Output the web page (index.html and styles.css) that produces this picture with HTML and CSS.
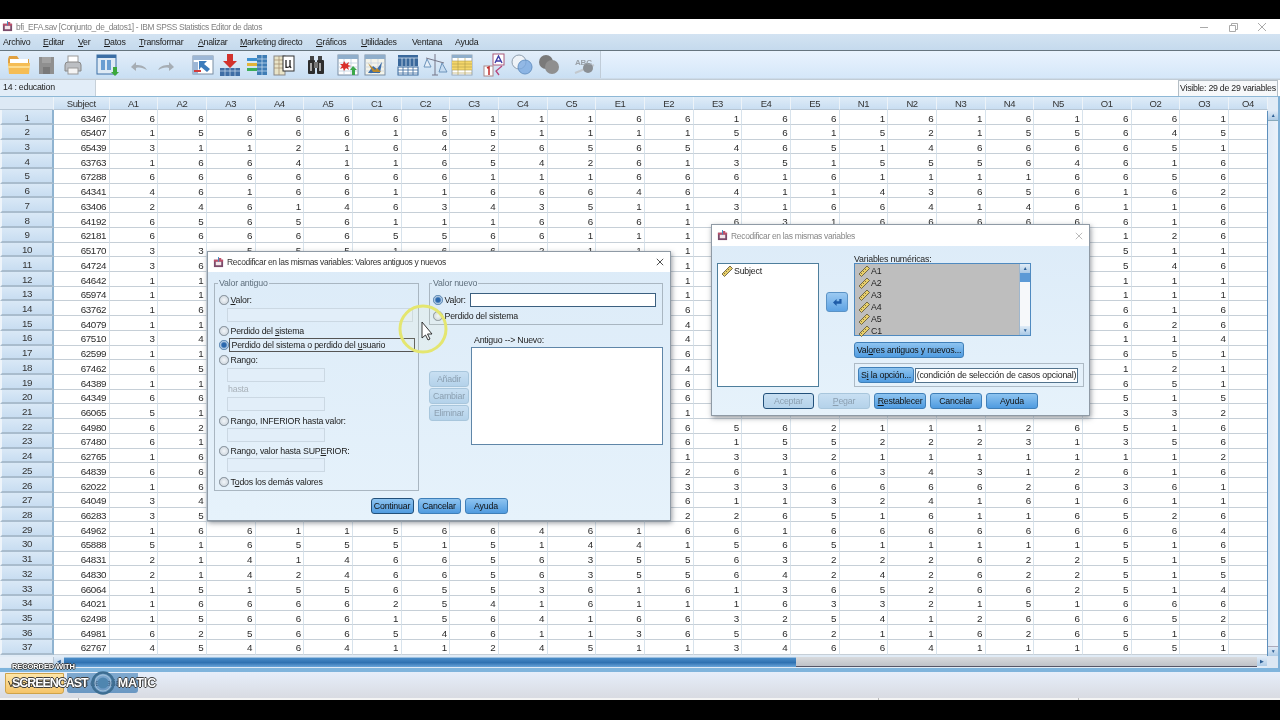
FILE: index.html
```html
<!DOCTYPE html>
<html lang="es">
<head>
<meta charset="utf-8">
<title>bfi_EFA.sav - IBM SPSS Statistics Editor de datos</title>
<link rel="stylesheet" href="styles.css">
</head>
<body>
<div class="screen">
<div class="letterbox"></div>
<main class="app">
<header class="titlebar">
<svg class="appicon" viewBox="0 0 12 12"><rect x="1" y="3" width="10" height="8" fill="#7a4a6a"/><rect x="3" y="5" width="6" height="4" fill="#f3e6ea"/><path d="M1 3h5V1h3v2h2v2H1z" fill="#c0506a"/><path d="M6 0v5" stroke="#3a8ac0"/></svg>
<span class="title-text">bfi_EFA.sav [Conjunto_de_datos1] - IBM SPSS Statistics Editor de datos</span>
<div class="winctl">
<svg viewBox="0 0 10 10"><path d="M1 5.500h8" stroke="#aaa"/></svg>
<svg viewBox="0 0 10 10"><path d="M1.500 3.500h6v6h-6zM3.500 3.500V1.500h6v6h-2" fill="none" stroke="#aaa"/></svg>
<svg viewBox="0 0 10 10"><path d="M1 1l8 8M9 1l-8 8" stroke="#aaa"/></svg>
</div>
</header>
<nav class="menubar">
<span class="m-arch">Archivo</span><span class="m-edit"><u>E</u>ditar</span><span class="m-ver"><u>V</u>er</span><span class="m-dat"><u>D</u>atos</span><span class="m-tra"><u>T</u>ransformar</span><span class="m-ana"><u>A</u>nalizar</span><span class="m-mar"><u>M</u>arketing directo</span><span class="m-gra"><u>G</u>ráficos</span><span class="m-uti"><u>U</u>tilidades</span><span class="m-ven">Ventana</span><span class="m-ayu">Ayuda</span>
</nav>
<div class="toolbar">
<div class="tools">
<svg class="tool" viewBox="0 0 26 24"><path d="M2 6l1-3h8l2 3h10v4H2z" fill="#e0a040"/><rect x="4" y="6" width="18" height="6" fill="#fff"/><path d="M2 10h22l-1 11H3z" fill="#f5bd55"/><path d="M2 13h22v2H2z" fill="#fcdc90"/></svg>
<svg class="tool" viewBox="0 0 26 24"><path d="M6 4h15v17H6z" fill="#8f8f8f"/><rect x="9" y="4" width="9" height="6" fill="#a2a2a2"/><rect x="10" y="14" width="7" height="7" fill="#797979"/></svg>
<svg class="tool" viewBox="0 0 26 24"><rect x="8" y="3" width="10" height="7" fill="#fff" stroke="#999"/><path d="M5 12a3 3 0 0 1 3-3h10a3 3 0 0 1 3 3v6H5z" fill="#bcbfc3" stroke="#888"/><rect x="8" y="15" width="10" height="6" fill="#f4f4f4" stroke="#999"/></svg>
<svg class="tool g7" viewBox="0 0 26 24"><rect x="3" y="2" width="19" height="19" fill="#dfeaf5" stroke="#3b6ea5"/><rect x="3" y="2" width="19" height="3" fill="#3b6ea5"/><path d="M7 7h4v10H7zM13 7h4v10h-4z" fill="#6a9ed2"/><path d="M19 14h4v5h2l-4 4-4-4h2z" fill="#3ca83c"/></svg>
<svg class="tool g5" viewBox="0 0 26 24"><path d="M5 14l5-5v3c5 0 9 1 11 5-4-2-7-3-11-2v3z" fill="#a6adb4"/></svg>
<svg class="tool" viewBox="0 0 26 24"><path d="M21 14l-5-5v3c-5 0-9 1-11 5 4-2 7-3 11-2v3z" fill="#a6adb4"/></svg>
<svg class="tool g10" viewBox="0 0 26 24"><rect x="3" y="3" width="20" height="18" fill="#fff" stroke="#7b8ea3"/><path d="M3 3h20v4H3zM3 9h5v12H3z" fill="#9db7d6"/><path d="M9 8l8 0-3 3 6 5-3 3-6-5-2 3z" fill="#3c7cbc"/><path d="M4 17h7v2H4z" fill="#d23c3c"/></svg>
<svg class="tool" viewBox="0 0 26 24"><rect x="3" y="15" width="20" height="8" fill="#3f6ea5"/><path d="M3 18h20M8 15v8M13 15v8M18 15v8" stroke="#cfe0f0" stroke-width=".7"/><path d="M10 1h6v7h4l-7 7-7-7h4z" fill="#d2322d"/></svg>
<svg class="tool" viewBox="0 0 26 24"><rect x="13" y="2" width="10" height="20" fill="#3f7db5"/><path d="M13 6h10M13 10h10M13 14h10M13 18h10M18 2v20" stroke="#cfe3f3" stroke-width=".7"/><path d="M3 5h10v3H3z" fill="#3c8fd0"/><path d="M3 10h10v3H3z" fill="#e2b43a"/><path d="M3 15h10v3H3z" fill="#3cae5a"/></svg>
<svg class="tool" viewBox="0 0 26 24"><rect x="3" y="3" width="11" height="19" fill="#e9e4c8" stroke="#888"/><path d="M3 7h11M3 11h11M3 15h11M8 3v19" stroke="#a08a6a" stroke-width=".7"/><rect x="12" y="3" width="11" height="15" fill="#fff" stroke="#333"/><path d="M15 7v8M15 13q0 2 3 1l1-1V7M19 13l1 2" fill="none" stroke="#222" stroke-width="1.300"/></svg>
<svg class="tool g5" viewBox="0 0 26 24"><rect x="7" y="3" width="4" height="4" fill="#444"/><rect x="15" y="3" width="4" height="4" fill="#444"/><rect x="5" y="7" width="7" height="14" rx="1" fill="#2d2d2d"/><rect x="14" y="7" width="7" height="14" rx="1" fill="#2d2d2d"/><rect x="11" y="9" width="4" height="6" fill="#777"/><rect x="7" y="10" width="2" height="8" fill="#aaa"/><rect x="16" y="10" width="2" height="8" fill="#aaa"/></svg>
<svg class="tool g5" viewBox="0 0 26 24"><rect x="3" y="2" width="20" height="20" fill="#fff" stroke="#7b8ea3"/><path d="M3 2h20v4H3z" fill="#8faecb"/><path d="M3 10h20M3 14h20M3 18h20M9 6v16M16 6v16" stroke="#b6c8da" stroke-width=".7"/><path d="M9 8l2 3 3-2-1 3 3 1-3 1 1 3-3-2-2 3-1-3-3 1 2-3-2-2 3 0z" fill="#d9302b"/><path d="M18 13l4 4h-2v5h-3v-5h-2z" fill="#3ba84a"/></svg>
<svg class="tool" viewBox="0 0 26 24"><rect x="3" y="2" width="20" height="20" fill="#f4f4ea" stroke="#7b8ea3"/><path d="M3 2h20v4H3z" fill="#8faecb"/><path d="M3 10h20M3 14h20M3 18h20M9 6v16M16 6v16" stroke="#c0cddc" stroke-width=".7"/><path d="M6 20l5-7 4 3 5-7-2 11z" fill="#3a6ca8"/><path d="M6 10l7 7 2-2 4 4h-8z" fill="#b9892e"/></svg>
<svg class="tool g6" viewBox="0 0 26 24"><rect x="3" y="2" width="20" height="11" fill="#39689c"/><path d="M3 5h20M7 5v8M11 5v8M15 5v8M19 5v8" stroke="#d5e3f0" stroke-width=".8"/><rect x="3" y="14" width="20" height="8" fill="#fff" stroke="#39689c"/><path d="M3 17h20M3 20h20M8 14v8M13 14v8M18 14v8" stroke="#39689c" stroke-width=".8"/></svg>
<svg class="tool" viewBox="0 0 26 24"><path d="M13 1v3M4 5l18 5" stroke="#778"/><path d="M5 6l-3 8h7z" fill="#e6eff8" stroke="#6d94bb"/><path d="M20 10l-3 9h8z" fill="#c6dcf1" stroke="#6d94bb"/><path d="M10 22h6M13 4v18" stroke="#778"/></svg>
<svg class="tool" viewBox="0 0 26 24"><rect x="3" y="2" width="20" height="20" fill="#fff" stroke="#9aa8b5"/><rect x="3" y="2" width="20" height="3" fill="#8faecb"/><rect x="3" y="8" width="20" height="9" fill="#f4d66a"/><path d="M3 8h20M3 11h20M3 14h20M3 17h20M3 20h20M9 5v17M16 5v17" stroke="#b09a4a" stroke-width=".6"/></svg>
<svg class="tool g6" viewBox="0 0 26 24"><rect x="11" y="1" width="11" height="11" fill="#fff" stroke="#aa5a7a"/><path d="M13 10l3.500-7 3.500 7M14 8h5" fill="none" stroke="#3e3ea8" stroke-width="1.400"/><rect x="2" y="13" width="9" height="10" fill="#fff" stroke="#a88"/><path d="M5 15l2-1v8" fill="none" stroke="#c02b2b" stroke-width="1.500"/><path d="M20 13l-6 5 3 4" fill="none" stroke="#b8457a" stroke-width="1.300"/></svg>
<svg class="tool" viewBox="0 0 26 24"><circle cx="10" cy="9" r="7" fill="#eef3f8" stroke="#8f9faf"/><circle cx="16" cy="14" r="7" fill="#7aa9e0" fill-opacity=".8" stroke="#6a95c5"/></svg>
<svg class="tool" viewBox="0 0 26 24"><circle cx="10" cy="9" r="7" fill="#7a7a7a"/><circle cx="16" cy="14" r="7" fill="#8f8f8f"/></svg>
<svg class="tool g9" viewBox="0 0 26 24"><path d="M3 20l5-2 14-6" stroke="#c2c8ce" stroke-width="2" fill="none"/><circle cx="16" cy="15" r="5" fill="#8a8f94"/><text x="3" y="12" class="abc">ABC</text></svg>
</div>
</div>
<div class="cellbar">
<div class="cellname">14 : education</div>
<div class="visible">Visible: 29 de 29 variables</div>
</div>
<section class="sheet">
<table class="data">
<thead><tr><th><th>Subject<th>A1<th>A2<th>A3<th>A4<th>A5<th>C1<th>C2<th>C3<th>C4<th>C5<th>E1<th>E2<th>E3<th>E4<th>E5<th>N1<th>N2<th>N3<th>N4<th>N5<th>O1<th>O2<th>O3<th>O4</thead>
<tbody>
<tr><th>1<td>63467<td>6<td>6<td>6<td>6<td>6<td>6<td>5<td>1<td>1<td>1<td>6<td>6<td>1<td>6<td>6<td>1<td>6<td>1<td>6<td>1<td>6<td>6<td>1<td>
<tr><th>2<td>65407<td>1<td>5<td>6<td>6<td>6<td>1<td>6<td>5<td>1<td>1<td>1<td>1<td>5<td>6<td>1<td>5<td>2<td>1<td>5<td>5<td>6<td>4<td>5<td>
<tr><th>3<td>65439<td>3<td>1<td>1<td>2<td>1<td>6<td>4<td>2<td>6<td>5<td>6<td>5<td>4<td>6<td>5<td>1<td>4<td>6<td>6<td>6<td>6<td>5<td>1<td>
<tr><th>4<td>63763<td>1<td>6<td>6<td>4<td>1<td>1<td>6<td>5<td>4<td>2<td>6<td>1<td>3<td>5<td>1<td>5<td>5<td>5<td>6<td>4<td>6<td>1<td>6<td>
<tr><th>5<td>67288<td>6<td>6<td>6<td>6<td>6<td>6<td>6<td>1<td>1<td>1<td>6<td>6<td>6<td>1<td>6<td>1<td>1<td>1<td>1<td>6<td>6<td>5<td>6<td>
<tr><th>6<td>64341<td>4<td>6<td>1<td>6<td>6<td>1<td>1<td>6<td>6<td>6<td>4<td>6<td>4<td>1<td>1<td>4<td>3<td>6<td>5<td>6<td>1<td>6<td>2<td>
<tr><th>7<td>63406<td>2<td>4<td>6<td>1<td>4<td>6<td>3<td>4<td>3<td>5<td>1<td>1<td>3<td>1<td>6<td>6<td>4<td>1<td>4<td>6<td>1<td>1<td>6<td>
<tr><th>8<td>64192<td>6<td>5<td>6<td>5<td>6<td>1<td>1<td>1<td>6<td>6<td>6<td>1<td>6<td>3<td>1<td>6<td>6<td>6<td>6<td>6<td>6<td>1<td>6<td>
<tr><th>9<td>62181<td>6<td>6<td>6<td>6<td>6<td>5<td>5<td>6<td>6<td>1<td>1<td>1<td><td><td><td><td><td><td><td><td>1<td>2<td>6<td>
<tr><th>10<td>65170<td>3<td>3<td>5<td>5<td>5<td>1<td>6<td>6<td>2<td>1<td>1<td>1<td><td><td><td><td><td><td><td><td>5<td>1<td>1<td>
<tr><th>11<td>64724<td>3<td>6<td><td><td><td><td><td><td><td><td><td>1<td><td><td><td><td><td><td><td><td>5<td>4<td>6<td>
<tr><th>12<td>64642<td>1<td>1<td><td><td><td><td><td><td><td><td><td>1<td><td><td><td><td><td><td><td><td>1<td>1<td>1<td>
<tr><th>13<td>65974<td>1<td>1<td><td><td><td><td><td><td><td><td><td>1<td><td><td><td><td><td><td><td><td>1<td>1<td>1<td>
<tr><th>14<td>63762<td>1<td>6<td><td><td><td><td><td><td><td><td><td>6<td><td><td><td><td><td><td><td><td>6<td>1<td>6<td>
<tr><th>15<td>64079<td>1<td>1<td><td><td><td><td><td><td><td><td><td>4<td><td><td><td><td><td><td><td><td>6<td>2<td>6<td>
<tr><th>16<td>67510<td>3<td>4<td><td><td><td><td><td><td><td><td><td>4<td><td><td><td><td><td><td><td><td>1<td>1<td>4<td>
<tr><th>17<td>62599<td>1<td>1<td><td><td><td><td><td><td><td><td><td>6<td><td><td><td><td><td><td><td><td>6<td>5<td>1<td>
<tr><th>18<td>67462<td>6<td>5<td><td><td><td><td><td><td><td><td><td>4<td><td><td><td><td><td><td><td><td>1<td>2<td>1<td>
<tr><th>19<td>64389<td>1<td>1<td><td><td><td><td><td><td><td><td><td>6<td><td><td><td><td><td><td><td><td>6<td>5<td>1<td>
<tr><th>20<td>64349<td>6<td>6<td><td><td><td><td><td><td><td><td><td>6<td><td><td><td><td><td><td><td><td>5<td>1<td>5<td>
<tr><th>21<td>66065<td>5<td>1<td><td><td><td><td><td><td><td><td><td>1<td><td><td><td><td><td><td><td><td>3<td>3<td>2<td>
<tr><th>22<td>64980<td>6<td>2<td><td><td><td><td><td><td><td><td><td>6<td>5<td>6<td>2<td>1<td>1<td>1<td>2<td>6<td>5<td>1<td>6<td>
<tr><th>23<td>67480<td>6<td>1<td><td><td><td><td><td><td><td><td><td>6<td>1<td>5<td>5<td>2<td>2<td>2<td>3<td>1<td>3<td>5<td>6<td>
<tr><th>24<td>62765<td>1<td>6<td><td><td><td><td><td><td><td><td><td>1<td>3<td>3<td>2<td>1<td>1<td>1<td>1<td>1<td>1<td>1<td>2<td>
<tr><th>25<td>64839<td>6<td>6<td><td><td><td><td><td><td><td><td><td>2<td>6<td>1<td>6<td>3<td>4<td>3<td>1<td>2<td>6<td>1<td>6<td>
<tr><th>26<td>62022<td>1<td>6<td><td><td><td><td><td><td><td><td><td>3<td>3<td>3<td>6<td>6<td>6<td>6<td>2<td>6<td>3<td>6<td>1<td>
<tr><th>27<td>64049<td>3<td>4<td><td><td><td><td><td><td><td><td><td>6<td>1<td>1<td>3<td>2<td>4<td>1<td>6<td>1<td>6<td>1<td>1<td>
<tr><th>28<td>66283<td>3<td>5<td><td><td><td><td><td><td><td><td><td>2<td>2<td>6<td>5<td>1<td>6<td>1<td>1<td>6<td>5<td>2<td>6<td>
<tr><th>29<td>64962<td>1<td>6<td>6<td>1<td>1<td>5<td>6<td>6<td>4<td>6<td>1<td>6<td>6<td>1<td>6<td>6<td>6<td>6<td>6<td>6<td>6<td>6<td>4<td>
<tr><th>30<td>65888<td>5<td>1<td>6<td>5<td>5<td>5<td>1<td>5<td>1<td>4<td>4<td>1<td>5<td>6<td>5<td>1<td>1<td>1<td>1<td>1<td>5<td>1<td>6<td>
<tr><th>31<td>64831<td>2<td>1<td>4<td>1<td>4<td>6<td>6<td>5<td>6<td>3<td>5<td>5<td>6<td>3<td>2<td>2<td>2<td>6<td>2<td>2<td>5<td>1<td>5<td>
<tr><th>32<td>64830<td>2<td>1<td>4<td>2<td>4<td>6<td>6<td>5<td>6<td>3<td>5<td>5<td>6<td>4<td>2<td>4<td>2<td>6<td>2<td>2<td>5<td>1<td>5<td>
<tr><th>33<td>66064<td>1<td>5<td>1<td>5<td>5<td>6<td>5<td>5<td>3<td>6<td>1<td>6<td>1<td>3<td>6<td>5<td>2<td>6<td>6<td>2<td>5<td>1<td>4<td>
<tr><th>34<td>64021<td>1<td>6<td>6<td>6<td>6<td>2<td>5<td>4<td>1<td>6<td>1<td>1<td>1<td>6<td>3<td>3<td>2<td>1<td>5<td>1<td>6<td>6<td>6<td>
<tr><th>35<td>62498<td>1<td>5<td>6<td>6<td>6<td>1<td>5<td>6<td>4<td>1<td>6<td>6<td>3<td>2<td>5<td>4<td>1<td>2<td>6<td>6<td>6<td>5<td>2<td>
<tr><th>36<td>64981<td>6<td>2<td>5<td>6<td>6<td>5<td>4<td>6<td>1<td>1<td>3<td>6<td>5<td>6<td>2<td>1<td>1<td>6<td>2<td>6<td>5<td>1<td>6<td>
<tr><th>37<td>62767<td>4<td>5<td>4<td>6<td>4<td>1<td>1<td>2<td>4<td>5<td>1<td>1<td>3<td>4<td>6<td>6<td>4<td>1<td>1<td>1<td>6<td>5<td>1<td>
</tbody>
</table>
<div class="vscroll"><span class="arrow">▲</span><span class="vthumb"></span><span class="arrow">▼</span></div>
<div class="hscroll"><span class="hcorner"></span><span class="arrow">◀</span><span class="hthumb"></span><span class="htrack"></span><span class="arrow">▶</span></div>
<div class="corner"></div>
</section>
<div class="tabs">
<span class="tab tab-on">Vista de datos</span>
<span class="tab tab-off">Vista de variables</span>
</div>
<div class="status"><span></span><span></span><span></span><span></span></div>

<section class="dlg dlg-values">
<div class="dlg-title"><svg class="appicon" viewBox="0 0 12 12"><rect x="1" y="3" width="10" height="8" fill="#7a4a6a"/><rect x="3" y="5" width="6" height="4" fill="#f3e6ea"/><path d="M1 3h5V1h3v2h2v2H1z" fill="#c0506a"/><path d="M6 0v5" stroke="#3a8ac0"/></svg><span>Recodificar en las mismas variables: Valores antiguos y nuevos</span><svg class="dlg-x" viewBox="0 0 10 10"><path d="M1 1l8 8M9 1l-8 8" stroke="#222"/></svg></div>
<div class="values-body">
<fieldset class="box old">
<legend>Valor antiguo</legend>
<label class="opt"><i class="radio"></i><span><u>V</u>alor:</span></label>
<div class="inp wide m1"></div>
<label class="opt m2"><i class="radio"></i><span>Perdido del <u>s</u>istema</span></label>
<label class="opt"><i class="radio on"></i><span class="focus">Perdido del sistema o perdido del <u>u</u>suario</span></label>
<label class="opt m1"><i class="radio"></i><span>Ran<u>g</u>o:</span></label>
<div class="inp m1"></div>
<div class="hasta">hasta</div>
<div class="inp"></div>
<label class="opt m3"><i class="radio"></i><span>Ran<u>g</u>o, INFERIOR hasta valor:</span></label>
<div class="inp"></div>
<label class="opt m2"><i class="radio"></i><span>Rango, valor hasta SUP<u>E</u>RIOR:</span></label>
<div class="inp"></div>
<label class="opt m3"><i class="radio"></i><span>T<u>o</u>dos los demás valores</span></label>
</fieldset>
<div class="new-col">
<fieldset class="box new">
<legend>Valor nuevo</legend>
<label class="opt new-value"><i class="radio on"></i><span>Va<u>l</u>or:</span><span class="inp active"></span></label>
<label class="opt new-miss"><i class="radio"></i><span>Perdido del sistema</span></label>
</fieldset>
<div class="old-new">
<div class="side-btns">
<button class="btn off">Añadir</button>
<button class="btn off">Cambiar</button>
<button class="btn off">Eliminar</button>
</div>
<div class="on-col"><div class="on-label">Antiguo --&gt; Nuevo:</div><div class="on-list"></div></div>
</div>
</div>
</div>
<div class="dlg-foot values-foot">
<button class="btn w43 default">Continuar</button><button class="btn w43">Cancelar</button><button class="btn w43">Ayuda</button>
</div>
</section>

<section class="dlg dlg-recode">
<div class="dlg-title faded"><svg class="appicon" viewBox="0 0 12 12"><rect x="1" y="3" width="10" height="8" fill="#7a4a6a"/><rect x="3" y="5" width="6" height="4" fill="#f3e6ea"/><path d="M1 3h5V1h3v2h2v2H1z" fill="#c0506a"/><path d="M6 0v5" stroke="#3a8ac0"/></svg><span>Recodificar en las mismas variables</span><svg class="dlg-x" viewBox="0 0 10 10"><path d="M1 1l8 8M9 1l-8 8" stroke="#aaa"/></svg></div>
<div class="recode-body">
<div class="src-list"><div class="var"><svg class="ruler" viewBox="0 0 12 12"><path d="M1 9l8-8 2.500 2.500-8 8z" fill="#e8cf6a" stroke="#5a5030" stroke-width=".8"/><path d="M3 8l1 1M5 6l1 1M7 4l1 1" stroke="#5a5030" stroke-width=".7"/></svg>Subject</div></div>
<button class="arrow-btn"><svg viewBox="0 0 12 10"><path d="M1 5l4-4v2.500h3V1h2.500v5.500H5V9z" fill="#1f5ca8"/></svg></button>
<div class="target">
<div class="num-label"><u>V</u>ariables numéricas:</div>
<div class="num-list">
<div class="num-items">
<div class="var"><svg class="ruler" viewBox="0 0 12 12"><path d="M1 9l8-8 2.500 2.500-8 8z" fill="#e8cf6a" stroke="#5a5030" stroke-width=".8"/><path d="M3 8l1 1M5 6l1 1M7 4l1 1" stroke="#5a5030" stroke-width=".7"/></svg>A1</div>
<div class="var"><svg class="ruler" viewBox="0 0 12 12"><path d="M1 9l8-8 2.500 2.500-8 8z" fill="#e8cf6a" stroke="#5a5030" stroke-width=".8"/><path d="M3 8l1 1M5 6l1 1M7 4l1 1" stroke="#5a5030" stroke-width=".7"/></svg>A2</div>
<div class="var"><svg class="ruler" viewBox="0 0 12 12"><path d="M1 9l8-8 2.500 2.500-8 8z" fill="#e8cf6a" stroke="#5a5030" stroke-width=".8"/><path d="M3 8l1 1M5 6l1 1M7 4l1 1" stroke="#5a5030" stroke-width=".7"/></svg>A3</div>
<div class="var"><svg class="ruler" viewBox="0 0 12 12"><path d="M1 9l8-8 2.500 2.500-8 8z" fill="#e8cf6a" stroke="#5a5030" stroke-width=".8"/><path d="M3 8l1 1M5 6l1 1M7 4l1 1" stroke="#5a5030" stroke-width=".7"/></svg>A4</div>
<div class="var"><svg class="ruler" viewBox="0 0 12 12"><path d="M1 9l8-8 2.500 2.500-8 8z" fill="#e8cf6a" stroke="#5a5030" stroke-width=".8"/><path d="M3 8l1 1M5 6l1 1M7 4l1 1" stroke="#5a5030" stroke-width=".7"/></svg>A5</div>
<div class="var"><svg class="ruler" viewBox="0 0 12 12"><path d="M1 9l8-8 2.500 2.500-8 8z" fill="#e8cf6a" stroke="#5a5030" stroke-width=".8"/><path d="M3 8l1 1M5 6l1 1M7 4l1 1" stroke="#5a5030" stroke-width=".7"/></svg>C1</div>
</div>
<div class="list-scroll"><span class="lbtn">▲</span><span class="lthumb"></span><span class="ltrack"></span><span class="lbtn">▼</span></div>
</div>
<button class="btn w110">Val<u>o</u>res antiguos y nuevos...</button>
<div class="if-box"><button class="btn w56">S<u>i</u> la opción...</button><div class="if-text">(condición de selección de casos opcional)</div></div>
</div>
</div>
<div class="dlg-foot recode-foot">
<button class="btn w51 off default">Aceptar</button><button class="btn w52 off"><u>P</u>egar</button><button class="btn w52"><u>R</u>establecer</button><button class="btn w52">Cancelar</button><button class="btn w52">Ayuda</button>
</div>
</section>

<div class="watermark">
<div class="wm-small">RECORDED WITH</div>
<div class="wm-big"><span>SCREENCAST</span><svg class="wm-logo" viewBox="0 0 24 24"><circle cx="12" cy="12" r="10.500" fill="none" stroke="#3e6e92" stroke-width="2.500"/><circle cx="12" cy="12" r="5.500" fill="#4f86b0"/><circle cx="12" cy="12" r="8" fill="none" stroke="#a9c6dc" stroke-width=".8"/></svg><span class="wm-matic">MATIC</span></div>
</div>
<svg class="pointer" viewBox="0 0 56 56"><circle cx="26" cy="26" r="23" fill="#f6f6b0" fill-opacity=".1" stroke="#e4e670" stroke-width="3"/><path d="M25 19v16l3.500-3 2.500 5 2-1-2.500-5h4.500z" fill="#fff" stroke="#222" stroke-width=".9"/></svg>
</main>
<div class="letterbox bottom"></div>
</div>
</body>
</html>
```
FILE: styles.css
```css
* { box-sizing: border-box; }
html, body { margin: 0; height: 720px; overflow: hidden; background: #000; }
body { font-family: "Liberation Sans", Arial, sans-serif; font-size: 8.800px; letter-spacing: -.2px; color: #222; }
button { font: inherit; letter-spacing: inherit; padding: 0; color: inherit; cursor: default; }
u { text-decoration-thickness: .6px; text-underline-offset: 1px; }
.screen { width: 1280px; height: 720px; display: flex; flex-direction: column; }
.letterbox { height: 19px; background: #000; flex: none; }
.letterbox.bottom { height: 20px; }
.app { position: relative; height: 681px; display: flex; flex-direction: column; background: #fff; overflow: hidden; filter: blur(.3px); }

.titlebar { height: 15px; flex: none; display: flex; align-items: center; padding-left: 2px; background: #fff; color: #808080; font-size: 8.400px; letter-spacing: -.35px; }
.appicon { width: 11px; height: 11px; margin-right: 3px; flex: none; }
.winctl { margin-left: auto; display: flex; gap: 19px; margin-right: 13px; }
.winctl svg { width: 10px; height: 10px; }

.menubar { height: 16px; flex: none; background: linear-gradient(#d3e3f2, #c5daed); display: flex; align-items: center; padding-bottom: 1px; font-size: 8.800px; letter-spacing: -.3px; color: #1c1c1c; }
.m-arch { margin-left: 3px; width: 40px; } .m-edit { width: 35px; } .m-ver { width: 26px; } .m-dat { width: 35px; } .m-tra { width: 59px; } .m-ana { width: 42px; } .m-mar { width: 76px; } .m-gra { width: 45px; } .m-uti { width: 51px; } .m-ven { width: 43px; }

.toolbar { height: 30px; flex: none; border-top: 1px solid #66757f; background: linear-gradient(#e9f3fe, #d5e7f9 92%, #bcc5cc); }
.tools { height: 27px; width: 601px; padding-left: 6px; display: flex; align-items: center; gap: 1px; background: linear-gradient(#e3eefa, #c9dff3); border-right: 1px solid #c0ccd8; }
.tool { width: 26px; height: 24px; flex: none; }
.g5 { margin-left: 5px; } .g6 { margin-left: 6px; } .g7 { margin-left: 7px; } .g9 { margin-left: 9px; } .g10 { margin-left: 10px; }
.abc { font: bold 8px "Liberation Sans", Arial, sans-serif; fill: #9aa1a8; }

.cellbar { height: 16px; flex: none; display: flex; justify-content: space-between; background: #fff; }
.cellname { width: 96px; padding: 2px 0 0 3px; background: #e2edf8; border-right: 1px solid #c7d0d8; font-size: 8.800px; letter-spacing: -.25px; }
.visible { width: 100px; margin-right: 2px; border: 1px solid #b5bec5; border-bottom: 0; background: #f6f8fa; font-size: 8.800px; padding: 2px 0 0 1px; letter-spacing: -.25px; white-space: nowrap; }

.sheet { height: 576px; flex: none; display: grid; grid-template-columns: 1267px 1fr; grid-template-rows: 558.700px 1fr; border-top: 1.500px solid #8eb8d6; border-right: 2px solid #7fb0d6; border-bottom: 4px solid #7fb4dc; background: #e0ebf6; }
.data { display: grid; grid-template-columns: 54px 55.500px repeat(23, 48.680px) 38.860px; grid-template-rows: 13.100px repeat(37, 14.720px); border-collapse: collapse; align-self: start; background: #fff; }
.data thead, .data tbody, .data tr { display: contents; }
.data th, .data td { display: block; font-weight: 400; font-size: 9.800px; letter-spacing: -.4px; padding: 0; overflow: hidden; }
.data td { text-align: right; padding: 2.500px 2.500px 0 0; line-height: 11.200px; border-right: 1px solid #d8e3ec; border-bottom: 1px solid #c6cfd7; color: #2b2b2b; }
.data th { text-align: center; background: linear-gradient(#d9e8f6, #c8ddf1); border-right: 1px solid #edf3f8; border-bottom: 1px solid #b7c6d4; color: #333; }
.data thead th { padding-top: 1px; line-height: 11.500px; font-size: 9.500px; background: linear-gradient(#dfecf8, #c9def2); }
.data thead th:first-child { background: #dde9f5; }
.data tbody th { padding-top: 2.500px; border-left: 2px solid #eef4fa; border-right: 2px solid #8fb3d0; border-bottom: 2px solid #a9bccd; line-height: 10.200px; }

.vscroll { display: flex; flex-direction: column; margin-top: 14px; border-left: 1px solid #5c8fbd; background: #dbe7f3; height: 545px; }
.vthumb { flex: 1; background: linear-gradient(90deg, #dfeaf6, #eaf2fa); border-top: 1px solid #8ab; border-bottom: 1px solid #aab; }
.arrow { font-size: 5px; line-height: 9px; height: 9px; width: 10px; text-align: center; color: #2d5f95; background: linear-gradient(#dfeaf6, #aecbe6); flex: none; }
.hscroll { grid-column: 1; display: flex; align-items: stretch; height: 10px; margin-top: 1px; }
.hcorner { width: 54px; background: #e6eef7; border-right: 1px solid #b8c6d4; }
.hthumb { width: 732px; background: linear-gradient(#4a8cc8, #2f72b2 50%, #6aa5da); border-top: 1px solid #9cc0e0; }
.htrack { flex: 1; background: linear-gradient(#d8dadd, #bfc2c8); border-bottom: 1px solid #556; }
.corner { background: #dce7f3; }

.tabs { height: 26px; flex: none; display: flex; gap: 3px; padding: 1px 0 0 5px; background: linear-gradient(#e6eefa, #d9dbe2); align-items: flex-start; }
.tab { height: 21px; line-height: 20px; text-align: center; white-space: nowrap; border-radius: 0 0 3px 3px; }
.tab-on { width: 59px; background: linear-gradient(#ffe6a8, #f5c469); border: 1px solid #cfa34a; }
.tab-off { width: 71px; height: 20px; background: linear-gradient(#7fa9cf, #6a97c2); color: #38597a; }
.status { flex: 1; display: flex; background: #f4f4f4; }
.status span:nth-child(1) { width: 78px; } .status span:nth-child(2) { width: 800px; border-left: 1px solid #bbb; } .status span:nth-child(3) { width: 200px; border-left: 1px solid #bbb; } .status span:nth-child(4) { flex: 1; border-left: 1px solid #bbb; }

.dlg { position: absolute; background: linear-gradient(#dcebf8, #e6f2fb); border: 1px solid #8f9aa5; box-shadow: 1px 2px 5px rgba(60, 70, 80, .55); display: flex; flex-direction: column; }
.dlg-values { left: 207px; top: 232px; width: 464px; height: 270px; z-index: 2; }
.dlg-recode { left: 711px; top: 205px; width: 379px; height: 192px; z-index: 1; }
.dlg-title { height: 20px; flex: none; background: #fff; display: flex; align-items: center; padding-left: 5px; font-size: 8.500px; color: #333; letter-spacing: -.33px; }
.dlg-title .appicon { margin-right: 3px; }
.dlg-title.faded { color: #888; height: 21px; }
.dlg-x { width: 8px; height: 8px; margin-left: auto; margin-right: 6px; }

.values-body { display: flex; padding: 6px 0 0 6px; gap: 10px; }
.box { margin: 0; padding: 0; border: 1px solid #a9b6c1; min-width: 0; }
.box legend { padding: 0 1px; margin-left: -1px; line-height: 11px; height: 11px; color: #5f6f7d; }
.old { width: 205px; height: 213px; padding: 4px 0 0 4px; }
.opt { height: 14px; display: flex; align-items: center; gap: 2px; white-space: nowrap; }
.radio { width: 9.500px; height: 9.500px; border-radius: 50%; flex: none; background: radial-gradient(#f2f6fa, #c7d0d8); border: 1px solid #7f8a94; }
.radio.on { background: radial-gradient(#2b68ad 35%, #cfe0f0 70%); border-color: #4d7cab; }
.focus { border: 1px solid #555; height: 14px; width: 186px; line-height: 13px; margin-left: -2px; padding-left: 2px; }
.inp { display: block; width: 98px; height: 14px; margin-left: 8px; background: #e2eef9; border: 1px solid #cbd8e3; }
.inp.wide { width: 186px; }
.m1 { margin-top: 1px; } .m2 { margin-top: 2px; } .m3 { margin-top: 3px; }
.hasta { height: 15px; line-height: 15px; margin-left: 9px; color: #a9b2ba; }
.new-col { width: 235px; display: flex; flex-direction: column; }
.new { width: 234px; height: 47px; padding: 4px 0 0 3px; }
.new-value .inp.active { width: 186px; height: 14px; margin-left: 2px; background: #fff; border-color: #3b5f7f; }
.new-miss { margin-top: 2px; }
.old-new { display: flex; margin-top: 11px; }
.side-btns { width: 42px; display: flex; flex-direction: column; gap: 1px; padding-top: 35px; }
.side-btns .btn { width: 40px; height: 16px; }
.on-label { height: 9px; line-height: 9px; margin-left: 3px; }
.on-list { width: 192px; height: 98px; background: #fff; border: 1px solid #5f86a8; margin-top: 2px; }
.btn { height: 16px; background: linear-gradient(#8ec4f0, #4f9be0); border: 1px solid #3f7fb8; border-radius: 3px; color: #111; white-space: nowrap; text-align: center; }
.btn.off { background: linear-gradient(#c8dff2, #b4d2ea); border-color: #a8c6dc; color: #8b9fb0; }
.btn.default { border: 1.500px solid #22507a; }
.w43 { width: 43px; } .w51 { width: 51px; } .w52 { width: 52px; } .w110 { width: 110px; } .w56 { width: 56px; }
.dlg-foot { display: flex; justify-content: center; gap: 4px; }
.values-foot { margin-top: 7px; }

.recode-body { display: flex; height: 147px; padding-left: 5px; }
.src-list { width: 102px; height: 124px; margin-top: 17px; background: #fff; border: 1px solid #4e7e9c; padding-top: 1px; }
.var { height: 12px; line-height: 12px; display: flex; align-items: center; gap: 0; padding-left: 3px; white-space: nowrap; }
.ruler { width: 12px; height: 12px; flex: none; margin-right: 1px; }
.arrow-btn { width: 22px; height: 20px; margin: 46px 6px 0 7px; background: linear-gradient(#9ccaf2, #5ea3e4); border: 1px solid #5b93c6; border-radius: 3px; display: flex; align-items: center; justify-content: center; }
.arrow-btn svg { width: 11px; height: 9px; }
.target { display: flex; flex-direction: column; align-items: flex-start; }
.num-label { height: 8px; line-height: 8px; margin-top: 9px; }
.num-list { width: 177px; height: 73px; display: flex; background: #bebebe; border: 1px solid #4f8ac0; }
.num-items { flex: 1; padding-top: 1px; padding-left: 0; }
.list-scroll { width: 11px; display: flex; flex-direction: column; background: #fff; border-left: 1px solid #9fb6cc; }
.lbtn { height: 9px; font-size: 5px; line-height: 9px; text-align: center; color: #2d5f95; background: linear-gradient(#e0ecf7, #a9c9e6); }
.lthumb { height: 9px; background: #5c9ad6; }
.ltrack { flex: 1; background: #f6f8fa; }
.w110 { margin-top: 6px; }
.if-box { width: 230px; height: 24px; margin-top: 5px; display: flex; align-items: center; gap: 1px; padding-left: 3px; border: 1px solid #adbac5; }
.if-text { width: 163px; height: 15px; line-height: 13px; background: #fff; border: 1px solid #52728c; text-align: center; letter-spacing: -.18px; white-space: nowrap; }
.recode-foot { margin-top: 0; }

.watermark { position: absolute; left: 12px; top: 642px; z-index: 3; color: #fff; letter-spacing: 0; white-space: nowrap; text-shadow: -1px 0 #3c3c3c, 1px 0 #3c3c3c, 0 -1px #3c3c3c, 0 1px #3c3c3c; }
.wm-small { font-size: 7.500px; font-weight: 700; letter-spacing: -.1px; line-height: 12px; }
.wm-big { display: flex; align-items: center; font-size: 12.500px; font-weight: 700; letter-spacing: -1.050px; line-height: 20px; margin-top: -2px; }
.wm-logo { width: 24px; height: 24px; margin: 0 3px; }
.wm-matic { letter-spacing: 0; }
.pointer { position: absolute; left: 397px; top: 284px; width: 56px; height: 56px; z-index: 4; }
```
